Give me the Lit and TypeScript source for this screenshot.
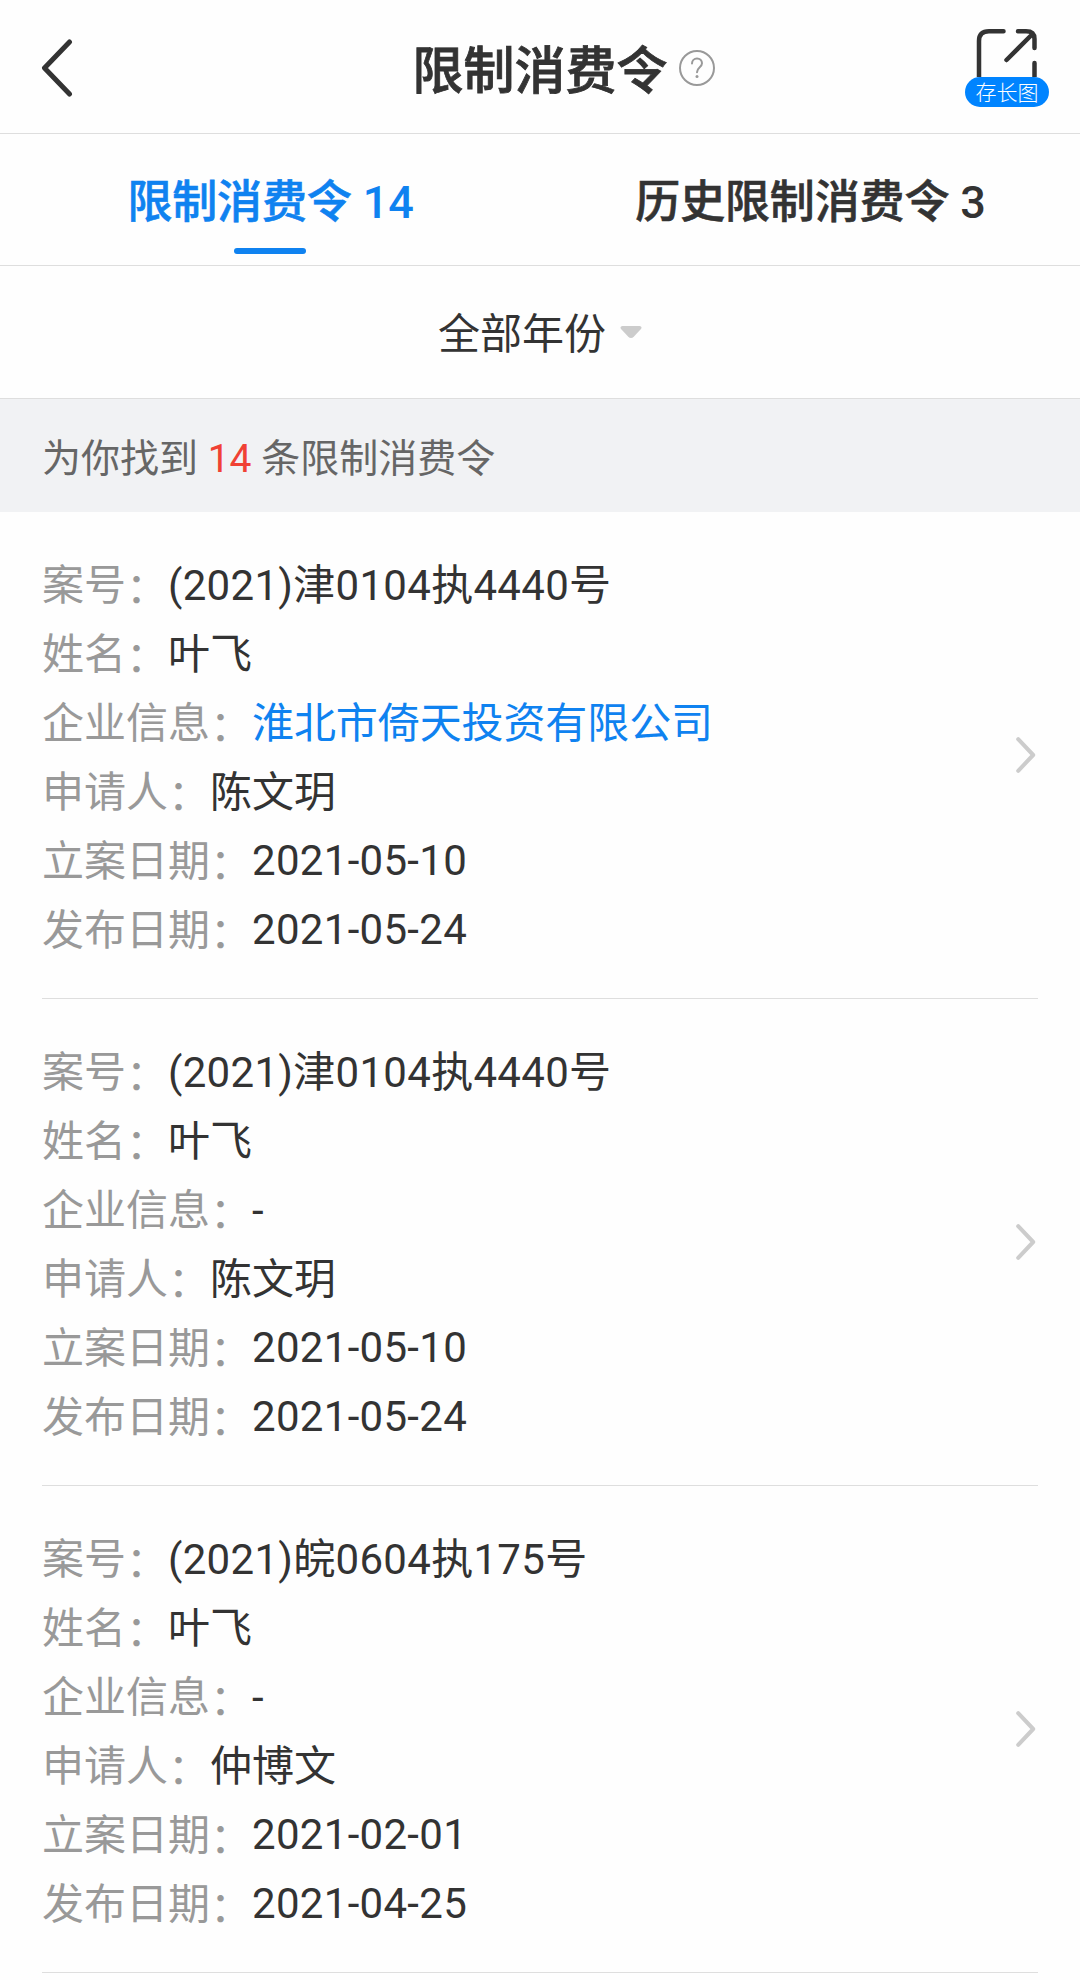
import { LitElement, html, css } from "lit";
import { customElement, property } from "lit/decorators.js";

interface CaseRecord {
  caseNo: string;
  name: string;
  company: string;
  applicant: string;
  filed: string;
  published: string;
}

const RECORDS: CaseRecord[] = [
  { caseNo: "(2021)津0104执4440号", name: "叶飞", company: "淮北市倚天投资有限公司", applicant: "陈文玥", filed: "2021-05-10", published: "2021-05-24" },
  { caseNo: "(2021)津0104执4440号", name: "叶飞", company: "", applicant: "陈文玥", filed: "2021-05-10", published: "2021-05-24" },
  { caseNo: "(2021)皖0604执175号", name: "叶飞", company: "", applicant: "仲博文", filed: "2021-02-01", published: "2021-04-25" },
];

@customElement("case-record")
export class CaseRecordItem extends LitElement {
  @property({ attribute: false }) record!: CaseRecord;

  static styles = css`
    :host { display: block; padding: 0 42px; }
    .card {
      display: flex; align-items: center; justify-content: space-between;
      box-sizing: border-box; height: 487px; padding-right: 2px;
      border-bottom: 1px solid #dedede;
    }
    .rows { display: flex; flex-direction: column; padding-top: 5px; }
    .row { display: flex; height: 69px; line-height: 69px; font-size: 42px; white-space: pre; }
    .label { color: #999; }
    .colon { vertical-align: -3px; }
    .value { color: #333; }
    .numeric { letter-spacing: 0.3px; }
    .date { line-height: 67px; }
    .link { color: #0f82f0; letter-spacing: -0.1px; }
    .chevron { display: block; }
  `;

  private row(label: string, value: string, kind = "") {
    return html`<div class="row"><span class="label">${label}<span class="colon">：</span></span><span class="value ${kind}">${value}</span></div>`;
  }

  render() {
    const r = this.record;
    return html`
      <div class="card">
        <div class="rows">
          ${this.row("案号", r.caseNo, "numeric")}
          ${this.row("姓名", r.name)}
          ${this.row("企业信息", r.company || "-", r.company ? "link" : "")}
          ${this.row("申请人", r.applicant)}
          ${this.row("立案日期", r.filed, "numeric date")}
          ${this.row("发布日期", r.published, "numeric date")}
        </div>
        <svg class="chevron" width="20" height="38" viewBox="0 0 20 38" fill="none" stroke="#ccc" stroke-width="4" stroke-linecap="round" stroke-linejoin="round">
          <path d="M2.200 3.200 17.200 19 2.200 34.800" />
        </svg>
      </div>`;
  }
}

@customElement("app-root")
export class AppRoot extends LitElement {
  static styles = css`
    :host {
      display: block; width: 1080px; height: 1980px; overflow: hidden; background: #fefefe;
      color: #333; font-family: Roboto, "Noto Sans CJK SC", sans-serif; text-spacing-trim: space-all;
    }
    .header {
      display: grid; grid-template-columns: 1fr auto 1fr; align-items: center;
      box-sizing: border-box; height: 134px; border-bottom: 1px solid #dedede;
    }
    .back { display: block; margin: 3px 0 0 41px; }
    .title { font-size: 51px; line-height: 60px; font-weight: 500; padding-top: 10px; -webkit-text-stroke: 0.8px currentColor; }
    .right { display: flex; justify-content: space-between; align-items: center; padding: 3px 31px 0 11px; }
    .help { display: block; }
    .save { display: flex; flex-direction: column; align-items: center; }
    .save svg { display: block; }
    .badge {
      width: 84px; height: 30px; border-radius: 15px; background: #0084ff; color: #fff;
      font-size: 21px; line-height: 32px; text-align: center; font-weight: 300;
    }
    .tabs { display: grid; grid-template-columns: 1fr 1fr; box-sizing: border-box; height: 132px; border-bottom: 1px solid #dedede; }
    .tab {
      display: flex; flex-direction: column; align-items: center; justify-content: space-between;
      padding: 36px 0 11px; font-size: 45px; line-height: 66px; font-weight: 500; white-space: pre;
    }
    .name { padding-left: 1px; letter-spacing: -0.15px; }
    .cjk { -webkit-text-stroke: 0.6px currentColor; }
    .active { color: #0f82f0; }
    .bar { width: 72px; height: 6px; border-radius: 3px; background: #0f82f0; }
    .filter {
      display: flex; align-items: center; justify-content: center; gap: 14px;
      box-sizing: border-box; height: 133px; border-bottom: 1px solid #dedede; font-size: 42px; line-height: 60px;
    }
    .filter-text { padding-top: 5px; }
    .filter svg { display: block; }
    .summary { height: 113px; padding: 0 42px; background: #f1f2f4; color: #666; font-size: 39px; line-height: 120px; box-sizing: border-box; white-space: pre; }
    .count { color: #f04134; }
  `;

  render() {
    return html`
      <div class="header">
        <svg class="back" width="32" height="58" viewBox="0 0 32 58" fill="none" stroke="#333" stroke-width="5" stroke-linecap="round" stroke-linejoin="round">
          <path d="M28.500 3 3.500 29l25 26" />
        </svg>
        <div class="title">限制消费令</div>
        <div class="right">
          <svg class="help" width="36" height="36" viewBox="0 0 36 36" fill="none" stroke="#999" stroke-width="2" stroke-linecap="round" stroke-linejoin="round">
            <circle cx="18" cy="18" r="17" />
            <path d="M13 13.500c0-3 2.200-5 5-5s5 2 5 4.800c0 4-5 4-5 9" />
            <circle cx="18" cy="26.500" r="1.500" fill="#999" stroke="none" />
          </svg>
          <div class="save">
            <svg width="64" height="48" viewBox="0 0 64 48" fill="none" stroke="#333" stroke-width="4.500" stroke-linecap="round" stroke-linejoin="round">
              <path d="M4 50V12Q4 2.300 14 2.300H28.500M43 2.300H51Q59.500 2.300 59.500 10V19M59.500 34V50M31.500 31 57 5.500" />
            </svg>
            <div class="badge">存长图</div>
          </div>
        </div>
      </div>
      <div class="tabs">
        <div class="tab active"><span class="name"><span class="cjk">限制消费令</span> 14</span><span class="bar"></span></div>
        <div class="tab"><span class="name"><span class="cjk">历史限制消费令</span> 3</span></div>
      </div>
      <div class="filter">
        <span class="filter-text">全部年份</span>
        <svg width="22" height="12" viewBox="0 0 22 12" fill="#ccc"><path d="M2.500 0h17q3 .5 1.500 3l-7 7.500q-3 3-6 0L1 3Q-.5.5 2.500 0z" /></svg>
      </div>
      <div class="summary">为你找到 <span class="count">14</span> 条限制消费令</div>
      ${RECORDS.map((r) => html`<case-record .record=${r}></case-record>`)}`;
  }
}
